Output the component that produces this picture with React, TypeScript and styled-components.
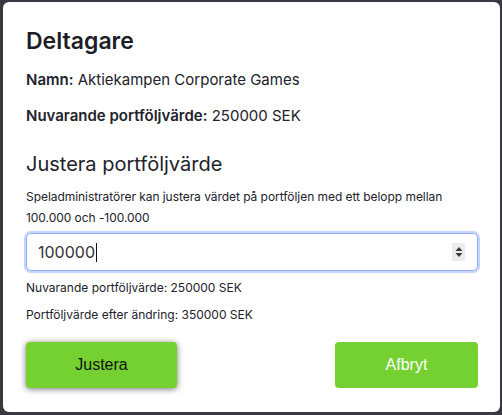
import React from 'react';
import styled, { createGlobalStyle } from 'styled-components';

const GlobalStyle = createGlobalStyle`
  html, body {
    margin: 0;
    padding: 0;
    background: #3a3942;
  }

  body {
    font-family: Inter, 'Noto Sans', sans-serif;
    color: #1f1f28;
  }
`;

export default function App() {
  return (
    <>
      <GlobalStyle />
      <Modal>
        <Title>Deltagare</Title>
        <InfoLine>
          <strong>Namn:</strong> Aktiekampen Corporate Games
        </InfoLine>
        <InfoLine $gap={18}>
          <strong>Nuvarande portföljvärde:</strong> 250000 SEK
        </InfoLine>

        <SectionTitle>Justera portföljvärde</SectionTitle>
        <Hint>
          Speladministratörer kan justera värdet på portföljen med ett belopp mellan 100.000 och -100.000
        </Hint>

        <Field>
          <FieldValue>
            100000
            <Caret />
          </FieldValue>
          <Spinner>
            <svg width="8" height="12" viewBox="0 0 8 12">
              <path d="M4 1 L7.5 5 L0.5 5 Z" fill="#3a3a3a" />
              <path d="M4 11 L7.5 7 L0.5 7 Z" fill="#3a3a3a" />
            </svg>
          </Spinner>
        </Field>

        <Summary>Nuvarande portföljvärde: 250000 SEK</Summary>
        <Summary>Portföljvärde efter ändring: 350000 SEK</Summary>

        <ButtonRow>
          <ActionButton $raised>Justera</ActionButton>
          <ActionButton $light>Afbryt</ActionButton>
        </ButtonRow>
      </Modal>
    </>
  );
}

const Modal = styled.div`
  box-sizing: border-box;
  width: 497px;
  height: 410px;
  margin: 2px 0 0 3px;
  padding: 25px 22px 0 23px;
  background: #ffffff;
  border-radius: 6px;
`;

const Title = styled.h2`
  margin: 0;
  font-size: 23px;
  line-height: 28px;
  font-weight: 600;
  color: #1d1d27;
`;

const InfoLine = styled.p<{ $gap?: number }>`
  margin: ${({ $gap }) => $gap ?? 16}px 0 0;
  font-size: 15px;
  line-height: 18px;
  color: #22222b;

  strong {
    font-weight: 600;
  }
`;

const SectionTitle = styled.h3`
  margin: 27px 0 0;
  font-size: 20px;
  line-height: 24px;
  font-weight: 400;
  color: #22222b;
`;

const Hint = styled.p`
  margin: 10px 0 0;
  font-size: 12px;
  line-height: 21px;
  letter-spacing: -0.05px;
  color: #22222b;
`;

const Field = styled.div`
  box-sizing: border-box;
  display: flex;
  align-items: center;
  justify-content: space-between;
  height: 38px;
  margin-top: 5px;
  padding: 0 12px 0 11px;
  border: 1px solid #90acf4;
  border-radius: 5px;
  box-shadow: 0 0 0 2px #c6d5fb;
`;

const FieldValue = styled.span`
  display: flex;
  align-items: center;
  font-size: 16px;
  color: #333338;
`;

const Caret = styled.span`
  display: inline-block;
  width: 1px;
  height: 19px;
  margin-left: 1px;
  background: #111;
`;

const Spinner = styled.span`
  display: flex;
  align-items: center;
  justify-content: center;
  width: 13px;
  height: 18px;
  background: #ececec;
`;

const Summary = styled.p`
  margin: 6px 0 0;
  font-size: 12px;
  line-height: 21px;
  color: #22222b;
`;

const ButtonRow = styled.div`
  display: flex;
  justify-content: space-between;
  margin-top: 17px;
`;

const ActionButton = styled.button<{ $raised?: boolean; $light?: boolean }>`
  width: ${({ $raised }) => ($raised ? 151 : 143)}px;
  height: 46px;
  border: none;
  border-radius: 4px;
  background: #74d131;
  color: ${({ $light }) => ($light ? '#ffffff' : '#111111')};
  font-family: 'Liberation Sans', Arial, sans-serif;
  font-size: 16px;
  box-shadow: ${({ $raised }) => ($raised ? '0 1px 6px rgba(0, 0, 0, 0.55)' : 'none')};
  cursor: pointer;
`;
